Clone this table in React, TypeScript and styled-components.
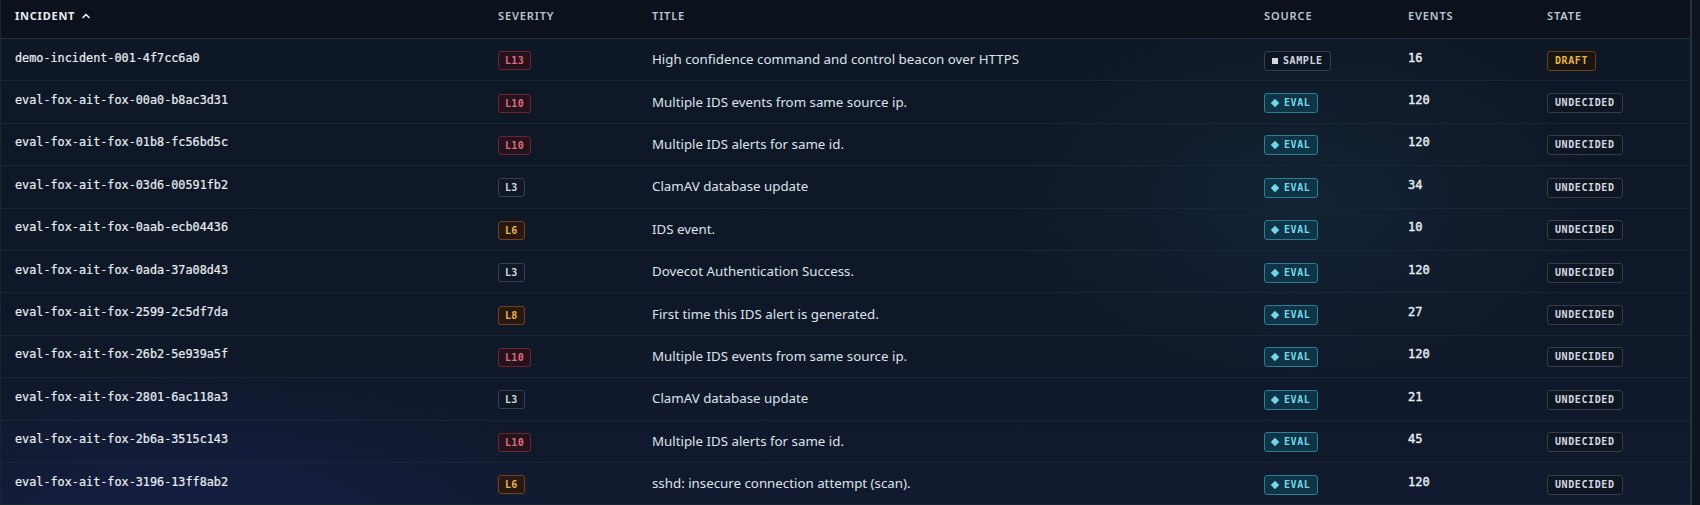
import React from "react";
import styled, { createGlobalStyle } from "styled-components";

const GlobalStyle = createGlobalStyle`
  html, body { margin: 0; padding: 0; background: #0c141f; }
  body { font-family: "Noto Sans", "Open Sans", sans-serif; }
  * { box-sizing: border-box; }
`;

type Sev = "red" | "amber" | "neutral";
type Row = { id: string; sev: string; sevTone: Sev; title: string; source: "SAMPLE" | "EVAL"; events: number; state: "DRAFT" | "UNDECIDED" };

const rows: Row[] = [
  { id: "demo-incident-001-4f7cc6a0", sev: "L13", sevTone: "red", title: "High confidence command and control beacon over HTTPS", source: "SAMPLE", events: 16, state: "DRAFT" },
  { id: "eval-fox-ait-fox-00a0-b8ac3d31", sev: "L10", sevTone: "red", title: "Multiple IDS events from same source ip.", source: "EVAL", events: 120, state: "UNDECIDED" },
  { id: "eval-fox-ait-fox-01b8-fc56bd5c", sev: "L10", sevTone: "red", title: "Multiple IDS alerts for same id.", source: "EVAL", events: 120, state: "UNDECIDED" },
  { id: "eval-fox-ait-fox-03d6-00591fb2", sev: "L3", sevTone: "neutral", title: "ClamAV database update", source: "EVAL", events: 34, state: "UNDECIDED" },
  { id: "eval-fox-ait-fox-0aab-ecb04436", sev: "L6", sevTone: "amber", title: "IDS event.", source: "EVAL", events: 10, state: "UNDECIDED" },
  { id: "eval-fox-ait-fox-0ada-37a08d43", sev: "L3", sevTone: "neutral", title: "Dovecot Authentication Success.", source: "EVAL", events: 120, state: "UNDECIDED" },
  { id: "eval-fox-ait-fox-2599-2c5df7da", sev: "L8", sevTone: "amber", title: "First time this IDS alert is generated.", source: "EVAL", events: 27, state: "UNDECIDED" },
  { id: "eval-fox-ait-fox-26b2-5e939a5f", sev: "L10", sevTone: "red", title: "Multiple IDS events from same source ip.", source: "EVAL", events: 120, state: "UNDECIDED" },
  { id: "eval-fox-ait-fox-2801-6ac118a3", sev: "L3", sevTone: "neutral", title: "ClamAV database update", source: "EVAL", events: 21, state: "UNDECIDED" },
  { id: "eval-fox-ait-fox-2b6a-3515c143", sev: "L10", sevTone: "red", title: "Multiple IDS alerts for same id.", source: "EVAL", events: 45, state: "UNDECIDED" },
  { id: "eval-fox-ait-fox-3196-13ff8ab2", sev: "L6", sevTone: "amber", title: "sshd: insecure connection attempt (scan).", source: "EVAL", events: 120, state: "UNDECIDED" },
];

const Page = styled.div`
  width: 1700px;
  height: 505px;
  overflow: hidden;
  background: #0d1520;
`;

const Table = styled.div`
  width: 1692px;
  height: 505px;
  border-left: 1px solid #1a2533;
  border-right: 2px solid #243240;
  background:
    radial-gradient(ellipse 420px 260px at 1300px 200px, rgba(40, 80, 110, 0.2), transparent 70%),
    radial-gradient(ellipse 500px 200px at 200px 520px, rgba(30, 40, 110, 0.35), transparent 75%),
    linear-gradient(180deg, #0e1724 0%, #0f1828 60%, #111a2e 100%);
`;

const cols = "483px 154px 612px 144px 139px 1fr";

const HeaderRow = styled.div`
  display: grid;
  grid-template-columns: ${cols};
  height: 39px;
  align-items: start;
  padding-top: 8px;
  background: #0b121c;
  border-bottom: 1px solid #1d3340;
`;

const HeadCell = styled.div<{ $active?: boolean }>`
  padding-left: 14px;
  font-size: 11px;
  font-weight: ${(p) => (p.$active ? 700 : 600)};
  letter-spacing: ${(p) => (p.$active ? "0.07em" : "0.08em")};
  line-height: 15px;
  color: ${(p) => (p.$active ? "#e9eef3" : "#bcc6d1")};
  display: flex;
  align-items: center;
  gap: 6px;
`;

const BodyRow = styled.div`
  display: grid;
  grid-template-columns: ${cols};
  height: 42.4px;
  align-items: center;
  border-bottom: 1px solid #182534;
`;

const Cell = styled.div`
  padding-left: 14px;
  display: flex;
  align-items: center;
`;

const Mono = styled.span`
  font-family: "DejaVu Sans Mono", "Liberation Mono", monospace;
  font-size: 11.8px;
  font-weight: 500;
  color: #e8edf2;
  margin-top: -4px;
  -webkit-text-stroke: 0.2px #e8edf2;
`;

const Events = styled(Mono)`
  font-size: 12px;
  -webkit-text-stroke: 0.4px #e8edf2;
`;

const Title = styled.span`
  font-size: 13.3px;
  color: #dde3ea;
  margin-top: -1px;
`;

const sevStyles: Record<Sev, { c: string; b: string; bg: string }> = {
  red: { c: "#e46a7e", b: "#6e2332", bg: "#24121c" },
  amber: { c: "#eab24c", b: "#74401e", bg: "#27190f" },
  neutral: { c: "#cfd6df", b: "#34404f", bg: "#0f1824" },
};

const SevBadge = styled.span<{ $tone: Sev }>`
  font-family: "DejaVu Sans Mono", "Liberation Mono", monospace;
  font-size: 10px;
  font-weight: 700;
  line-height: 13px;
  letter-spacing: 0.03em;
  padding: 2px 6px;
  border-radius: 3px;
  color: ${(p) => sevStyles[p.$tone].c};
  border: 1px solid ${(p) => sevStyles[p.$tone].b};
  background: ${(p) => sevStyles[p.$tone].bg};
  margin-top: 2px;
`;

const Tag = styled.span<{ $variant: "sample" | "eval" | "draft" | "undecided" }>`
  font-family: "DejaVu Sans Mono", "Liberation Mono", monospace;
  font-size: 10px;
  font-weight: 700;
  letter-spacing: 0.06em;
  line-height: 12px;
  padding: 3px 7px;
  border-radius: 3px;
  display: inline-flex;
  align-items: center;
  gap: 5px;
  margin-top: 2px;
  color: ${(p) =>
    p.$variant === "eval" ? "#74d6ea" : p.$variant === "draft" ? "#e6b43e" : "#d2d8e0"};
  border: 1px solid
    ${(p) =>
      p.$variant === "eval" ? "#2a7f94" : p.$variant === "draft" ? "#6a3f1f" : "#323e4c"};
  background: ${(p) =>
    p.$variant === "eval" ? "#0f3445" : p.$variant === "draft" ? "#1a1510" : "#0e1621"};
`;

const Square = styled.i`
  width: 6px;
  height: 6px;
  background: currentColor;
  display: inline-block;
`;

const Diamond = styled.i`
  width: 6px;
  height: 6px;
  background: currentColor;
  display: inline-block;
  transform: rotate(45deg);
  margin-right: 1px;
`;

const Chevron = () => (
  <svg width="10" height="10" viewBox="0 0 10 10" fill="none">
    <path d="M2 6.5 L5 3.5 L8 6.5" stroke="#e9eef3" strokeWidth="1.7" strokeLinecap="round" strokeLinejoin="round" />
  </svg>
);

export default function App() {
  return (
    <Page>
      <GlobalStyle />
      <Table>
        <HeaderRow>
          <HeadCell $active>
            INCIDENT <Chevron />
          </HeadCell>
          <HeadCell>SEVERITY</HeadCell>
          <HeadCell>TITLE</HeadCell>
          <HeadCell>SOURCE</HeadCell>
          <HeadCell>EVENTS</HeadCell>
          <HeadCell>STATE</HeadCell>
        </HeaderRow>
        {rows.map((r) => (
          <BodyRow key={r.id}>
            <Cell>
              <Mono>{r.id}</Mono>
            </Cell>
            <Cell>
              <SevBadge $tone={r.sevTone}>{r.sev}</SevBadge>
            </Cell>
            <Cell>
              <Title>{r.title}</Title>
            </Cell>
            <Cell>
              {r.source === "SAMPLE" ? (
                <Tag $variant="sample">
                  <Square />
                  SAMPLE
                </Tag>
              ) : (
                <Tag $variant="eval">
                  <Diamond />
                  EVAL
                </Tag>
              )}
            </Cell>
            <Cell>
              <Events>{r.events}</Events>
            </Cell>
            <Cell>
              <Tag $variant={r.state === "DRAFT" ? "draft" : "undecided"}>{r.state}</Tag>
            </Cell>
          </BodyRow>
        ))}
      </Table>
    </Page>
  );
}
